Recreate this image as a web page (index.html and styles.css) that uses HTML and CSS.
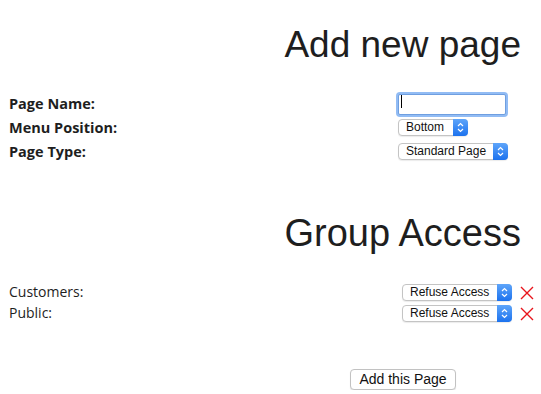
FILE: index.html
```html
<!doctype html>
<html lang="en">
    <head>
        <meta charset="UTF-8" />
        <meta name="viewport" content="width=device-width, initial-scale=1.0" />
        <title>Add new page</title>
        <link rel="stylesheet" href="styles.css">
    </head>
    <body>
        <div class="page">
            <h1 class="title">Add new page</h1>
            <form class="page-form" onsubmit="return false">
                <div class="field-row">
                    <label class="field-label" for="pageName">Page Name:</label>
                    <span class="text-wrap">
                        <input type="text" id="pageName" class="text-input" />
                        <span class="caret"></span>
                    </span>
                </div>
                <div class="field-row">
                    <label class="field-label" for="menuPos">Menu Position:</label>
                    <span class="select-wrap short">
                        <select id="menuPos" class="select">
                            <option>Bottom</option>
                            <option>Top</option>
                        </select>
                        <span class="stepper">
                            <svg width="7" height="11" viewBox="0 0 7 11"><path d="M1 4 L3.5 1.5 L6 4 M1 7 L3.5 9.5 L6 7" fill="none" stroke="#fff" stroke-width="1.2"/></svg>
                        </span>
                    </span>
                </div>
                <div class="field-row">
                    <label class="field-label" for="pageType">Page Type:</label>
                    <span class="select-wrap">
                        <select id="pageType" class="select">
                            <option>Standard Page</option>
                        </select>
                        <span class="stepper">
                            <svg width="7" height="11" viewBox="0 0 7 11"><path d="M1 4 L3.5 1.5 L6 4 M1 7 L3.5 9.5 L6 7" fill="none" stroke="#fff" stroke-width="1.2"/></svg>
                        </span>
                    </span>
                </div>
            </form>

            <h1 class="title group-title">Group Access</h1>
            <div class="access-list">
                <div class="access-row">
                    <span class="access-label">Customers:</span>
                    <span class="select-wrap">
                        <select class="select">
                            <option>Refuse Access</option>
                        </select>
                        <span class="stepper">
                            <svg width="7" height="11" viewBox="0 0 7 11"><path d="M1 4 L3.5 1.5 L6 4 M1 7 L3.5 9.5 L6 7" fill="none" stroke="#fff" stroke-width="1.2"/></svg>
                        </span>
                    </span>
                    <svg class="remove" width="14" height="14" viewBox="0 0 14 14"><path d="M1 1 L13 13 M13 1 L1 13" stroke="#e8141c" stroke-width="1.4"/></svg>
                </div>
                <div class="access-row">
                    <span class="access-label">Public:</span>
                    <span class="select-wrap">
                        <select class="select">
                            <option>Refuse Access</option>
                        </select>
                        <span class="stepper">
                            <svg width="7" height="11" viewBox="0 0 7 11"><path d="M1 4 L3.5 1.5 L6 4 M1 7 L3.5 9.5 L6 7" fill="none" stroke="#fff" stroke-width="1.2"/></svg>
                        </span>
                    </span>
                    <svg class="remove" width="14" height="14" viewBox="0 0 14 14"><path d="M1 1 L13 13 M13 1 L1 13" stroke="#e8141c" stroke-width="1.4"/></svg>
                </div>
            </div>

            <div class="actions">
                <button type="button" class="btn">Add this Page</button>
            </div>
        </div>
    </body>
</html>
```

FILE: styles.css
```css
body {
    margin: 0;
    background: #fff;
    color: #1e1e1e;
    font-family: "Open Sans", sans-serif;
}
.page {
    padding: 0 9px;
}
.title {
    margin: 24px 11px 0 0;
    font-family: "Liberation Sans", Arial, sans-serif;
    font-weight: 400;
    font-size: 37px;
    line-height: 41px;
    text-align: right;
    color: #1e1e1e;
}
.group-title {
    margin-top: 49px;
    font-size: 38px;
    line-height: 42px;
}
.page-form {
    margin: 26px 0 0;
}
.field-row {
    display: grid;
    grid-template-columns: 389px auto;
    align-items: center;
    height: 23px;
}
.field-row:nth-child(1) {
    height: 24px;
}
.field-row:nth-child(2) {
    height: 25px;
}
.field-label {
    font-weight: 700;
    font-size: 14.5px;
}
.text-wrap {
    position: relative;
    display: inline-block;
    width: 108px;
}
.text-input {
    box-sizing: border-box;
    width: 108px;
    height: 21px;
    margin: 0;
    border: 1px solid #6f9fe0;
    border-radius: 2px;
    box-shadow: 0 0 0 2px rgba(110, 165, 240, 0.75);
    outline: none;
    font-family: "Liberation Sans", Arial, sans-serif;
    font-size: 13px;
    vertical-align: middle;
}
.caret {
    position: absolute;
    left: 3px;
    top: 4px;
    width: 1px;
    height: 13px;
    background: #000;
}
.select-wrap {
    position: relative;
    display: inline-block;
    width: 110px;
    height: 17px;
}
.select-wrap.short {
    width: 70px;
}
.select {
    -webkit-appearance: none;
    appearance: none;
    box-sizing: border-box;
    width: 100%;
    height: 17px;
    margin: 0;
    padding: 0 18px 0 7px;
    border: 1px solid #c4c4c4;
    border-radius: 4px;
    background: #fff;
    color: #111;
    font-family: "Liberation Sans", Arial, sans-serif;
    font-size: 12px;
    line-height: 15px;
    box-shadow: 0 1px 1px rgba(0, 0, 0, 0.08);
    vertical-align: top;
}
.stepper {
    position: absolute;
    top: 0;
    right: 0;
    width: 15px;
    height: 17px;
    border-radius: 0 4px 4px 0;
    background: linear-gradient(#5ea5fa, #1c72ee);
    display: flex;
    align-items: center;
    justify-content: center;
    pointer-events: none;
}
.access-list {
    margin-top: 28px;
}
.access-row {
    display: grid;
    grid-template-columns: 385px 110px auto;
    align-items: center;
    column-gap: 8px;
    height: 21px;
}
.access-label {
    font-size: 14px;
    margin-top: -3px;
}
.remove {
    display: block;
    cursor: pointer;
}
.actions {
    margin-top: 43px;
    padding-left: 341px;
}
.btn {
    box-sizing: border-box;
    width: 106px;
    height: 21px;
    padding: 0;
    border: 1px solid #c2c2c2;
    border-radius: 4px;
    background: #fff;
    color: #111;
    font-family: "Liberation Sans", Arial, sans-serif;
    font-size: 14px;
    box-shadow: 0 1px 1px rgba(0, 0, 0, 0.1);
    cursor: pointer;
}
```
